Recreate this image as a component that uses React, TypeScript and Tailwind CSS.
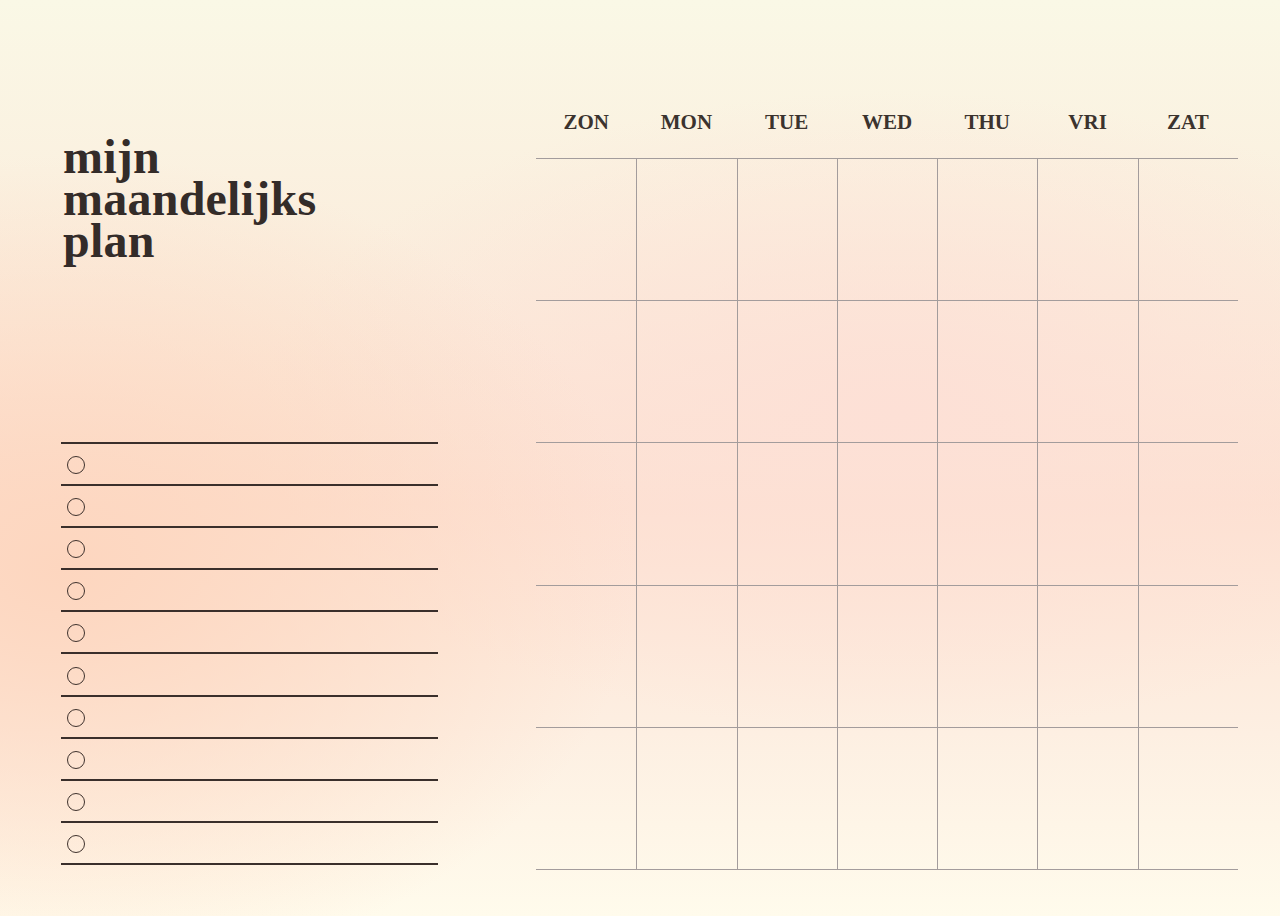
import React from "react";

const days = ["ZON", "MON", "TUE", "WED", "THU", "VRI", "ZAT"];

export default function App() {
  const cells = Array.from({ length: 35 }, (_, i) => i);
  const items = Array.from({ length: 10 }, (_, i) => i);
  return (
    <div
      className="w-[1280px] h-[916px] overflow-hidden flex bg-[radial-gradient(ellipse_45%_45%_at_5%_62%,#fdd6bf_0%,rgba(253,214,191,0)_100%),radial-gradient(ellipse_50%_35%_at_70%_45%,#fde0d6_0%,rgba(253,224,214,0)_100%),linear-gradient(180deg,#faf8e6_0%,#fbebdb_35%,#fde1d1_55%,#fdefe2_80%,#fffbec_100%)]"
      style={{ fontFamily: '"Liberation Serif", serif' }}
    >
      <div className="w-[536px] shrink-0 pl-[61px] flex flex-col">
        <h1 className="mt-[136px] text-[48px] leading-[42px] font-bold text-[#342c29] tracking-[0.005em] pl-[2px]">
          mijn
          <br />
          maandelijks
          <br />
          plan
        </h1>
        <div className="mt-[180px] w-[377px] border-t-2 border-[#3a2f2b]">
          {items.map((i) => (
            <div
              key={i}
              className="h-[42.1px] border-b-2 border-[#3a2f2b] flex items-center"
            >
              <div className="ml-[6px] mt-[2px] w-[18px] h-[18px] rounded-full border-[1.6px] border-[#3f322d]" />
            </div>
          ))}
        </div>
      </div>
      <div className="w-[702px] pt-[86px]">
        <div className="grid grid-cols-7 h-[72px] items-center">
          {days.map((d) => (
            <div
              key={d}
              className="text-center text-[21px] font-bold text-[#3b332e] leading-none"
            >
              {d}
            </div>
          ))}
        </div>
        <div className="grid grid-cols-7 border-b border-[#a39c9c]">
          {cells.map((i) => (
            <div
              key={i}
              className={
                i % 7 === 0
                  ? "h-[142.2px] border-t border-[#a39c9c]"
                  : "h-[142.2px] border-t border-l border-[#a39c9c]"
              }
            />
          ))}
        </div>
      </div>
    </div>
  );
}
